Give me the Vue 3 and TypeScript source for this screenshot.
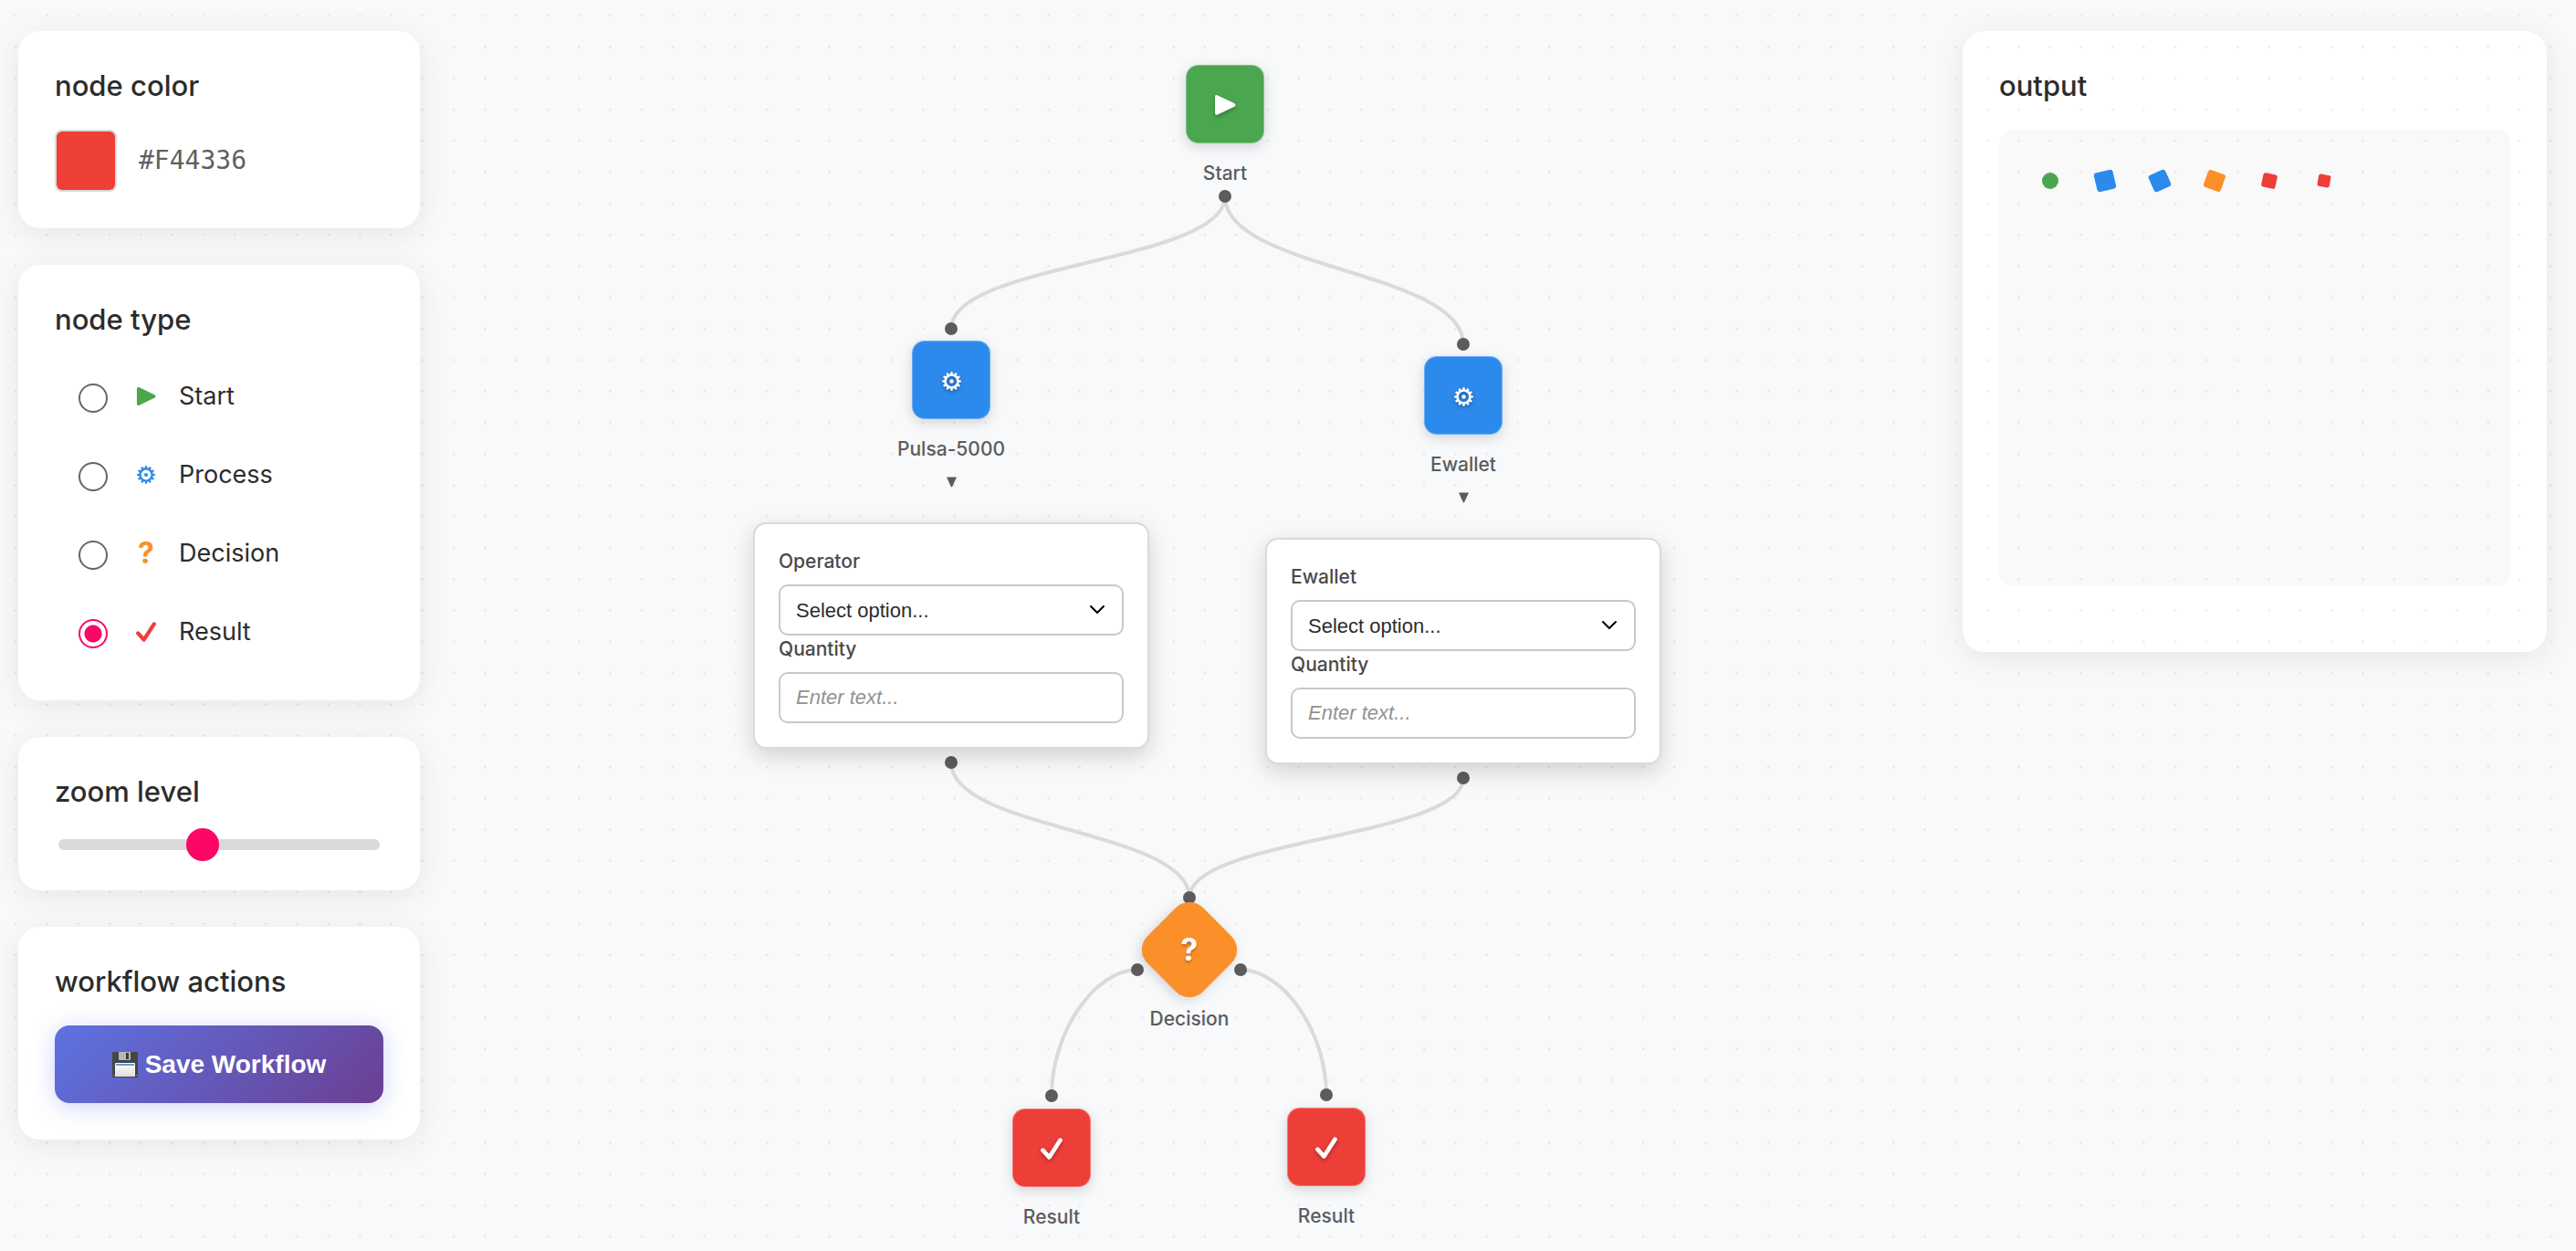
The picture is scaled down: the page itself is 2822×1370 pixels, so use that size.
<script setup lang="ts">
import { ref } from 'vue'

type Kind = 'start' | 'process' | 'decision' | 'result'

interface Field {
  id: string
  label: string
}

interface FlowNode {
  id: string
  kind: Kind
  label: string
  x: number
  y: number
  form?: { select: Field; text: Field }
}

interface Port {
  x: number
  y: number
}

const nodeTypes: { value: Kind; label: string }[] = [
  { value: 'start', label: 'Start' },
  { value: 'process', label: 'Process' },
  { value: 'decision', label: 'Decision' },
  { value: 'result', label: 'Result' },
]

const selectedType = ref<Kind>('result')
const nodeColor = ref('#F44336')
const zoom = ref(443)

// x is the centre of a node, y the top of its tile
const nodes: FlowNode[] = [
  { id: 'start', kind: 'start', label: 'Start', x: 1342, y: 71 },
  {
    id: 'pulsa',
    kind: 'process',
    label: 'Pulsa-5000',
    x: 1042,
    y: 373,
    form: {
      select: { id: 'pulsa-operator', label: 'Operator' },
      text: { id: 'pulsa-quantity', label: 'Quantity' },
    },
  },
  {
    id: 'ewallet',
    kind: 'process',
    label: 'Ewallet',
    x: 1603,
    y: 390,
    form: {
      select: { id: 'ewallet-operator', label: 'Ewallet' },
      text: { id: 'ewallet-quantity', label: 'Quantity' },
    },
  },
  { id: 'decision', kind: 'decision', label: 'Decision', x: 1303, y: 997 },
  { id: 'result-left', kind: 'result', label: 'Result', x: 1152, y: 1214 },
  { id: 'result-right', kind: 'result', label: 'Result', x: 1453, y: 1213 },
]

const ports: Port[] = [
  { x: 1342, y: 215 },
  { x: 1042, y: 360 },
  { x: 1603, y: 377 },
  { x: 1042, y: 835 },
  { x: 1603, y: 852 },
  { x: 1303, y: 983 },
  { x: 1246, y: 1062 },
  { x: 1359, y: 1062 },
  { x: 1152, y: 1200 },
  { x: 1453, y: 1199 },
]

function vertical(a: Port, b: Port): string {
  const mid = (a.y + b.y) / 2
  return `M${a.x} ${a.y}C${a.x} ${mid} ${b.x} ${mid} ${b.x} ${b.y}`
}

function sideways(a: Port, b: Port): string {
  return `M${a.x} ${a.y}C${(a.x + b.x) / 2} ${a.y} ${b.x} ${(a.y + b.y) / 2} ${b.x} ${b.y}`
}

const links: string[] = [
  vertical(ports[0], ports[1]),
  vertical(ports[0], ports[2]),
  vertical(ports[3], ports[5]),
  vertical(ports[4], ports[5]),
  sideways(ports[6], ports[8]),
  sideways(ports[7], ports[9]),
]

const teeth = Array.from({ length: 12 }, (_, i) => i * 30)
</script>

<template>
  <div class="app">
    <svg width="0" height="0" class="defs" aria-hidden="true">
      <symbol id="icon-start" viewBox="0 0 24 24">
        <path d="M1 3.400Q1 .2 4 1.400L22 10Q25 12 22 14L4 22.600Q1 23.800 1 20.600Z" fill="currentColor" />
      </symbol>
      <symbol id="icon-process" viewBox="0 0 24 24">
        <circle cx="12" cy="12" r="8" fill="none" stroke="currentColor" stroke-width="3" />
        <circle cx="12" cy="12" r="2.500" fill="currentColor" />
        <rect v-for="a in teeth" :key="a" x="10.700" y="0.200" width="2.600" height="4" fill="currentColor" :transform="`rotate(${a} 12 12)`" />
      </symbol>
      <symbol id="icon-result" viewBox="0 0 24 24">
        <path d="M2.400 13.600L9.400 21.400L21.600 2.600" fill="none" stroke="currentColor" stroke-width="4.600" stroke-linecap="round" stroke-linejoin="round" />
      </symbol>
    </svg>

    <aside class="sidebar">
      <section class="panel">
        <h2>node color</h2>
        <div class="color-row">
          <input v-model="nodeColor" type="color" aria-label="node color" />
          <span class="hex">#F44336</span>
        </div>
      </section>

      <section class="panel">
        <h2 id="type-title">node type</h2>
        <div class="types" role="radiogroup" aria-labelledby="type-title">
          <label v-for="t in nodeTypes" :key="t.value" class="type">
            <input v-model="selectedType" type="radio" name="node-type" :value="t.value" />
            <span class="type-icon" :class="t.value">
              <template v-if="t.value === 'decision'">?</template>
              <svg v-else aria-hidden="true"><use :href="`#icon-${t.value}`" /></svg>
            </span>
            <span>{{ t.label }}</span>
          </label>
        </div>
      </section>

      <section class="panel">
        <h2 id="zoom-title">zoom level</h2>
        <div class="slider-row">
          <input v-model="zoom" class="slider" type="range" min="0" max="1000" aria-labelledby="zoom-title" />
        </div>
      </section>

      <section class="panel">
        <h2>workflow actions</h2>
        <button type="button" class="save">
          <svg class="floppy" viewBox="0 0 28 28" aria-hidden="true">
            <defs>
              <linearGradient id="paper" x1="0" y1="0" x2="0" y2="1">
                <stop offset="0" stop-color="#fff" />
                <stop offset="1" stop-color="#dedede" />
              </linearGradient>
            </defs>
            <path d="M1 0H27L28 1V27L27 28H1L0 27V1Z" fill="#454545" />
            <path d="M7 0H20V8Q20 9 19 9H8Q7 9 7 8Z" fill="#b5b7b8" />
            <rect x="15" y="1" width="3" height="7" fill="#3c3c3c" />
            <path d="M3 13Q3 12 4 12H24Q25 12 25 13V27H3Z" fill="url(#paper)" />
            <rect x="4" y="13" width="20" height="2" fill="#62a0d4" />
            <rect x="1" y="25" width="1" height="1" fill="#aaa" />
            <rect x="26" y="25" width="1" height="1" fill="#aaa" />
          </svg>
          Save Workflow
        </button>
      </section>
    </aside>

    <main class="canvas">
      <svg class="layer" aria-hidden="true">
        <path v-for="d in links" :key="d" :d="d" class="link" />
        <circle v-for="p in ports" :key="`${p.x}-${p.y}`" :cx="p.x" :cy="p.y" r="7" class="port" />
      </svg>

      <div v-for="n in nodes" :key="n.id" class="node" :style="{ left: n.x + 'px', top: n.y + 'px' }">
        <div class="tile" :class="n.kind">
          <span v-if="n.kind === 'decision'" class="tile-mark">?</span>
          <svg v-else class="tile-icon" aria-hidden="true"><use :href="`#icon-${n.kind}`" /></svg>
        </div>
        <div class="node-label">{{ n.label }}</div>
        <template v-if="n.form">
          <svg class="caret" viewBox="0 0 12 12" aria-hidden="true"><path d="M0 0H12L7 11Q6 13 5 11Z" /></svg>
          <form class="form" @submit.prevent>
            <label :for="n.form.select.id">{{ n.form.select.label }}</label>
            <div class="select-wrap">
              <select :id="n.form.select.id">
                <option>Select option...</option>
              </select>
              <svg class="chevron" viewBox="0 0 18 12" aria-hidden="true"><path d="M2 2L9 9L16 2" /></svg>
            </div>
            <label :for="n.form.text.id">{{ n.form.text.label }}</label>
            <input :id="n.form.text.id" type="text" placeholder="Enter text..." />
          </form>
        </template>
      </div>
    </main>

    <aside class="output panel">
      <h2>output</h2>
      <div class="preview">
        <span class="shape s1"></span>
        <span class="shape s2"></span>
        <span class="shape s3"></span>
        <span class="shape s4"></span>
        <span class="shape s5"></span>
        <span class="shape s6"></span>
      </div>
    </aside>

    <svg class="grid-dots" aria-hidden="true">
      <defs>
        <pattern id="dots" width="20" height="20" patternUnits="userSpaceOnUse" patternTransform="scale(1.714286)">
          <circle cx="10" cy="10" r="0.600" fill="#000" fill-opacity="0.120" />
        </pattern>
      </defs>
      <rect width="100%" height="100%" fill="url(#dots)" />
    </svg>
  </div>
</template>

<style>
body {
  background: #f7f9fb;
}
</style>

<style scoped>
.app {
  position: relative;
  display: flex;
  justify-content: space-between;
  align-items: flex-start;
  box-sizing: border-box;
  min-height: 100vh;
  padding: 34px 32px 34px 20px;
  overflow: hidden;
  font-family: Inter, 'Liberation Sans', sans-serif;
  color: #2c2c2c;
}

.defs {
  position: absolute;
}

.canvas,
.grid-dots,
.layer {
  position: absolute;
  inset: 0;
  width: 100%;
  height: 100%;
}

/* Stacking: output, dotted grid, canvas, sidebar */
.output {
  position: relative;
  z-index: 0;
  width: 640px;
  height: 680px;
}

.grid-dots {
  z-index: 1;
  pointer-events: none;
}

.canvas {
  z-index: 2;
}

.sidebar {
  position: relative;
  z-index: 3;
  display: flex;
  flex-direction: column;
  gap: 40px;
  width: 440px;
}

.link {
  fill: none;
  stroke: #dadada;
  stroke-width: 4;
}

.port {
  fill: #5c5c5c;
}

.panel {
  box-sizing: border-box;
  padding: 40px;
  border-radius: 24px;
  background: #fff;
  box-shadow: 0 6px 34px rgba(0, 0, 0, 0.08);
}

h2 {
  margin: 0 0 28px;
  font-size: 31px;
  line-height: 40px;
  font-weight: 500;
}

.color-row {
  display: flex;
  align-items: center;
  gap: 24px;
}

input[type='color'] {
  appearance: none;
  box-sizing: border-box;
  width: 68px;
  height: 68px;
  padding: 0;
  border: 2px solid #dadada;
  border-radius: 8px;
  background: #ee3e38;
  overflow: hidden;
}

input[type='color']::-webkit-color-swatch-wrapper {
  padding: 0;
}

input[type='color']::-webkit-color-swatch {
  border: 0;
  background: #ee3e38 !important;
}

.hex {
  font-family: 'DejaVu Sans Mono', monospace;
  font-size: 28px;
  line-height: 36px;
  color: #5f5f5f;
}

.types {
  display: flex;
  flex-direction: column;
  gap: 15px;
  padding-left: 26px;
}

.type {
  display: flex;
  align-items: center;
  height: 71px;
  font-size: 27px;
  line-height: 36px;
}

.type input {
  appearance: none;
  box-sizing: border-box;
  width: 32px;
  height: 32px;
  margin: 4px 0 0;
  border: 2px solid #666;
  border-radius: 50%;
}

.type input:checked {
  border-color: #fb0766;
  background: radial-gradient(circle, #fb0766 9px, transparent 10px);
}

.type-icon {
  display: flex;
  justify-content: center;
  width: 40px;
  margin: 0 16px 0 22px;
  font-size: 32px;
  font-weight: 700;
}

.type-icon svg {
  width: 22px;
  height: 22px;
}

.type-icon.start {
  color: #4aa64f;
}

.type-icon.process {
  color: #2c8aec;
}

.type-icon.process svg {
  width: 20px;
  height: 20px;
}

.type-icon.decision {
  color: #fb8f2a;
}

.type-icon.result {
  color: #ee3e38;
}

.slider-row {
  display: flex;
  padding: 4px;
}

.slider {
  appearance: none;
  width: 100%;
  height: 12px;
  margin: 0;
  border-radius: 6px;
  background: #dadada;
}

.slider::-webkit-slider-thumb {
  appearance: none;
  width: 36px;
  height: 36px;
  border-radius: 50%;
  background: #fb0766;
}

.save {
  display: flex;
  align-items: center;
  justify-content: center;
  gap: 8px;
  width: 100%;
  height: 85px;
  padding: 0;
  border: 0;
  border-radius: 16px;
  background: linear-gradient(135deg, #5d73e2, #6b3f92);
  box-shadow: 0 4px 24px rgba(93, 115, 226, 0.3);
  font-family: 'Liberation Sans', sans-serif;
  font-size: 28px;
  font-weight: 700;
  color: #fff;
}

.floppy {
  width: 28px;
  height: 28px;
}

.preview {
  display: flex;
  align-items: flex-start;
  gap: 40px;
  box-sizing: border-box;
  height: 500px;
  padding: 46px;
  border-radius: 16px;
  background: #f9f9f9;
}

.shape {
  flex: none;
  width: 20px;
  height: 20px;
  border-radius: 3px;
}

.s1 {
  background: #4aa64f;
  border-radius: 50%;
  transform: scale(0.9);
}

.s2 {
  background: #2c8aec;
  transform: rotate(-13deg) scale(1.06);
}

.s3 {
  background: #2c8aec;
  transform: rotate(-24deg);
}

.s4 {
  background: #fb8f2a;
  transform: rotate(20deg);
}

.s5 {
  background: #ee3e38;
  transform: rotate(12deg) scale(0.78);
}

.s6 {
  background: #ee3e38;
  transform: rotate(10deg) scale(0.67);
}

.node {
  position: absolute;
  display: flex;
  flex-direction: column;
  align-items: center;
  width: 434px;
  margin-left: -217px;
}

.tile {
  display: flex;
  align-items: center;
  justify-content: center;
  box-sizing: border-box;
  width: 86px;
  height: 86px;
  padding-top: 2px;
  border: 1px solid rgba(255, 255, 255, 0.3);
  border-radius: 14px;
  box-shadow: 0 4px 14px rgba(0, 0, 0, 0.15);
  color: #fff;
}

.tile.start {
  background: #4aa64f;
}

.tile.process {
  background: #2c8aec;
}

.tile.result {
  background: #ee3e38;
}

.tile.decision {
  padding: 0;
  border: 0;
  border-radius: 21px;
  background: #fb8f2a;
  transform: rotate(45deg);
}

.tile-icon {
  width: 24px;
  height: 24px;
  filter: drop-shadow(0 2px 2px rgba(0, 0, 0, 0.3));
}

.tile.process .tile-icon {
  width: 21px;
  height: 21px;
}

.tile-mark {
  transform: rotate(-45deg);
  font-size: 34px;
  line-height: 40px;
  font-weight: 700;
  text-shadow: 0 2px 3px rgba(0, 0, 0, 0.3);
}

.node-label {
  margin-top: 20px;
  font-size: 21px;
  line-height: 26px;
  font-weight: 500;
  color: #5c5c5c;
}

.caret {
  width: 11px;
  height: 12px;
  margin-top: 17px;
  fill: #5c5c5c;
}

.form {
  display: flex;
  flex-direction: column;
  box-sizing: border-box;
  width: 434px;
  margin-top: 38px;
  padding: 26px;
  border: 2px solid #dadada;
  border-radius: 14px;
  background: #fff;
  box-shadow: 0 8px 24px rgba(0, 0, 0, 0.16);
}

.form label {
  margin: 2px 0 12px;
  font-size: 21px;
  line-height: 26px;
  font-weight: 500;
  color: #4a4a4a;
}

.select-wrap {
  position: relative;
}

.form select,
.form input {
  appearance: none;
  display: block;
  box-sizing: border-box;
  width: 100%;
  height: 56px;
  padding: 0 17px;
  border: 2px solid #c8c8c8;
  border-radius: 10px;
  background: #fff;
  font-family: 'Liberation Sans', sans-serif;
  font-size: 22px;
  color: #2c2c2c;
}

.form input::placeholder {
  font-style: italic;
  color: #929292;
}

.chevron {
  position: absolute;
  right: 20px;
  top: 22px;
  width: 18px;
  height: 12px;
  fill: none;
  stroke: #000;
  stroke-width: 2;
  stroke-linecap: round;
  stroke-linejoin: round;
  pointer-events: none;
}
</style>
